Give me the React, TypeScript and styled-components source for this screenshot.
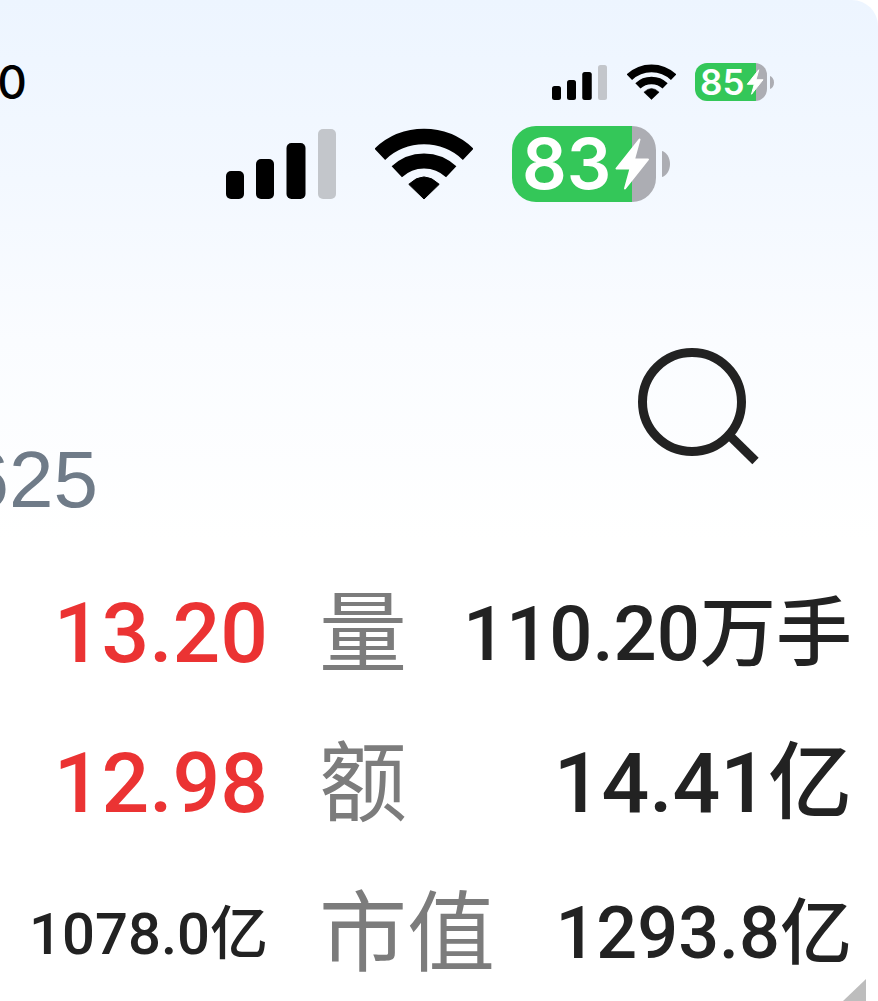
import React from "react";
import styled, { createGlobalStyle } from "styled-components";

const GlobalStyle = createGlobalStyle`
  * { box-sizing: border-box; }
  body {
    margin: 0;
    background: #ffffff;
    font-family: Roboto, "Noto Sans CJK SC", sans-serif;
  }
`;

const Page = styled.main`
  position: relative;
  height: 100vh;
  overflow: hidden;
  border-top-right-radius: 26px;
  background: linear-gradient(180deg, #edf5ff 0, #f3f8ff 180px, #fafcff 340px, #ffffff 540px);
`;

const StatusBar = styled.header`
  display: flex;
  align-items: center;
  justify-content: space-between;
  height: 38px;
  margin-top: 63px;
  padding-right: 104px;
`;

const Clipped = styled.div<{ $width: number }>`
  display: flex;
  justify-content: flex-end;
  width: ${(p) => p.$width}px;
  overflow: hidden;
`;

const Time = styled.time`
  font: 500 46px/46px Inter, sans-serif;
  color: #000000;
`;

const Enlarged = styled.section`
  display: flex;
  justify-content: flex-end;
  margin-top: 25px;
  padding-right: 208px;
`;

const Icons = styled.div<{ $unit: number }>`
  display: flex;
  align-items: center;
  gap: ${(p) => p.$unit * 39}px;
`;

const Battery = styled.div<{ $unit: number }>`
  display: flex;
  align-items: center;
  gap: ${(p) => p.$unit * 6}px;
`;

const BatteryBody = styled.div<{ $unit: number; $level: number }>`
  display: flex;
  align-items: center;
  width: ${(p) => p.$unit * 144}px;
  height: ${(p) => p.$unit * 76}px;
  padding-left: ${(p) => p.$unit * 10}px;
  border-radius: ${(p) => p.$unit * 24}px;
  background: linear-gradient(90deg, #34c759 ${(p) => p.$level}%, #acadb3 ${(p) => p.$level}%);
  color: #ffffff;
  font: 600 ${(p) => p.$unit * 70}px/1 Inter, sans-serif;
`;

const Percent = styled.span<{ $unit: number }>`
  flex: none;
  width: ${(p) => p.$unit * 92}px;
`;

const Bolt = styled.svg`
  flex: none;
`;

const Nub = styled.svg`
  flex: none;
`;

const TitleRow = styled.section`
  display: flex;
  align-items: flex-end;
  justify-content: space-between;
  height: 173px;
  margin-top: 145px;
  padding-right: 119px;
`;

const Code = styled.span`
  font: 400 80px/80px "Liberation Sans", sans-serif;
  color: #6f7b88;
`;

const SearchButton = styled.button`
  align-self: flex-start;
  display: block;
  padding: 0;
  border: 0;
  background: none;
  line-height: 0;
`;

const Quotes = styled.table`
  width: 100%;
  margin-top: 39px;
  border-collapse: collapse;
  table-layout: fixed;
`;

const Row = styled.tr`
  height: 150px;
`;

const Label = styled.th`
  width: 112px;
  padding: 0;
  font: 400 88px/134px "Noto Sans CJK SC", sans-serif;
  color: #7c7c7c;
  text-align: left;
  vertical-align: top;
  white-space: nowrap;
`;

const Value = styled.td<{ $size: number; $red?: boolean }>`
  padding: 0 26px 0 0;
  font-size: ${(p) => p.$size}px;
  font-weight: 500;
  line-height: 150px;
  color: ${(p) => (p.$red ? "#eb3333" : "#222222")};
  text-align: right;
  vertical-align: top;
  white-space: nowrap;
`;

const PriceValue = styled(Value)`
  width: 319px;
  padding-right: 51px;
`;

const Corner = styled.svg`
  position: absolute;
  right: 12px;
  bottom: 0;
`;

function StatusIcons({ unit, charge }: { unit: number; charge: number }) {
  return (
    <Icons $unit={unit}>
      <svg width={110 * unit} height={70 * unit} viewBox="0 0 110 70" aria-label="Signal">
        <rect x="0" y="42" width="18" height="28" rx="5" />
        <rect x="30" y="30" width="18" height="40" rx="5" />
        <rect x="60.5" y="14" width="19" height="56" rx="5" />
        <rect x="92" y="0" width="18" height="70" rx="5" fill="#c3c6cb" />
      </svg>
      <svg width={98 * unit} height={72 * unit} viewBox="0 0 98 72" aria-label="Wi-Fi">
        <path d="M4.8 26.3A64 64 0 0 1 93.2 26.3" fill="none" stroke="#000" strokeWidth="15.5" />
        <path d="M21.8 43.8A39.5 39.5 0 0 1 76.2 43.8" fill="none" stroke="#000" strokeWidth="15" />
        <path d="M33.8 56.3Q49 41.5 64.2 56.3L49 71Z" stroke="#000" strokeWidth="1" strokeLinejoin="round" />
      </svg>
      <Battery $unit={unit}>
        <BatteryBody $unit={unit} $level={charge}>
          <Percent $unit={unit}>{charge}</Percent>
          <Bolt width={36 * unit} height={52 * unit} viewBox="0 0 36 52" aria-hidden="true">
            <path
              d="M25.5 1.5L2.5 30.5H16.5L11 50.5L34 21.5H20Z"
              fill="#fff"
              stroke="#fff"
              strokeWidth="2"
              strokeLinejoin="round"
            />
          </Bolt>
        </BatteryBody>
        <Nub width={8 * unit} height={26 * unit} viewBox="0 0 8 26" aria-hidden="true">
          <path d="M0 0C4 1 8 6 8 13S4 25 0 26Z" fill="#acadb3" />
        </Nub>
      </Battery>
    </Icons>
  );
}

export default function App() {
  return (
    <>
      <GlobalStyle />
      <Page>
        <StatusBar>
          <Clipped $width={27}>
            <Time>0</Time>
          </Clipped>
          <StatusIcons unit={0.5} charge={85} />
        </StatusBar>
        <Enlarged>
          <StatusIcons unit={1} charge={83} />
        </Enlarged>
        <TitleRow>
          <Clipped $width={98}>
            <Code>625</Code>
          </Clipped>
          <SearchButton type="button" aria-label="Search">
            <svg width="121" height="118" viewBox="0 0 121 118" fill="none" stroke="#222" aria-hidden="true">
              <circle cx="54" cy="55" r="49.5" strokeWidth="9" />
              <path d="M90 87L117.5 114" strokeWidth="9" />
            </svg>
          </SearchButton>
        </TitleRow>
        <Quotes>
          <tbody>
            <Row>
              <PriceValue $size={84} $red>13.20</PriceValue>
              <Label scope="row">量</Label>
              <Value $size={76}>110.20万手</Value>
            </Row>
            <Row>
              <PriceValue $size={84} $red>12.98</PriceValue>
              <Label scope="row">额</Label>
              <Value $size={84}>14.41亿</Value>
            </Row>
            <Row>
              <PriceValue $size={58}>1078.0亿</PriceValue>
              <Label scope="row">市值</Label>
              <Value $size={72}>1293.8亿</Value>
            </Row>
          </tbody>
        </Quotes>
        <Corner width="23" height="22" viewBox="0 0 23 22" aria-hidden="true">
          <path d="M23 0V22H0Z" fill="#bdbdbd" />
        </Corner>
      </Page>
    </>
  );
}
